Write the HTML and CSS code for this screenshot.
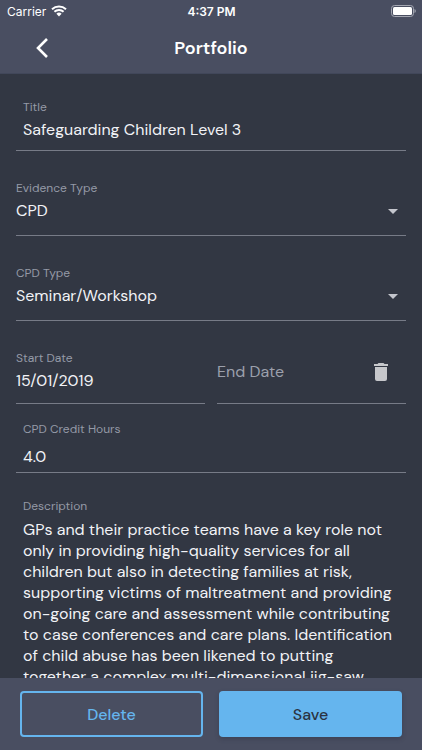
FILE: index.html
```html
<!DOCTYPE html>
<html lang="en">
<head>
<meta charset="utf-8">
<meta name="viewport" content="width=device-width, initial-scale=1">
<title>Portfolio</title>
<link rel="stylesheet" href="styles.css">
</head>
<body>
<div class="app">
  <header class="header">
    <div class="status">
      <div class="carrier">
        <span>Carrier</span>
        <svg class="wifi" viewBox="0 0 16 12" aria-hidden="true">
          <path d="M1 4.2a10.3 10.3 0 0 1 14 0M3.4 6.8a6.8 6.8 0 0 1 9.2 0" fill="none" stroke="currentColor" stroke-width="2"/>
          <path d="M5.4 8.8a3.8 3.8 0 0 1 5.2 0L8 11.5z" fill="currentColor"/>
        </svg>
      </div>
      <span class="time">4:37 PM</span>
      <svg class="battery" viewBox="0 0 25 12" aria-hidden="true">
        <rect x=".5" y=".5" width="22" height="11" rx="3" fill="none" stroke="#a4a7b2"/>
        <rect x="2" y="2" width="19" height="8" rx="1.5" fill="#fff"/>
        <path d="M23.5 4v4q1.3-.6 1.3-2t-1.3-2z" fill="#a4a7b2"/>
      </svg>
    </div>
    <div class="navbar">
      <button class="back" type="button" aria-label="Back">
        <svg viewBox="0 0 12 20" aria-hidden="true"><path d="M11 1 2 10l9 9" fill="none" stroke="currentColor" stroke-width="2.6"/></svg>
      </button>
      <h1 class="heading">Portfolio</h1>
    </div>
  </header>

  <main class="content">
    <form id="entry" class="form">
      <div class="field inset">
        <label for="title">Title</label>
        <input id="title" type="text" value="Safeguarding Children Level 3">
      </div>
      <div class="field choice">
        <label for="evidence">Evidence Type</label>
        <select id="evidence"><option>CPD</option></select>
      </div>
      <div class="field choice">
        <label for="cpd">CPD Type</label>
        <select id="cpd"><option>Seminar/Workshop</option></select>
      </div>
      <div class="dates">
        <div class="field date">
          <label for="start">Start Date</label>
          <input id="start" type="text" value="15/01/2019">
        </div>
        <div class="field end">
          <input id="end" type="text" placeholder="End Date" aria-label="End Date">
          <button class="clear" type="button" aria-label="Clear end date">
            <svg viewBox="0 0 14 18" aria-hidden="true"><path d="M0 1h3.5l1-1h5l1 1H14v2H0zM1 4h12v12a2 2 0 0 1-2 2H3a2 2 0 0 1-2-2z" fill="currentColor"/></svg>
          </button>
        </div>
      </div>
      <div class="field inset hours">
        <label for="hours">CPD Credit Hours</label>
        <input id="hours" type="text" inputmode="decimal" value="4.0">
      </div>
      <div class="field inset description">
        <label for="description">Description</label>
        <textarea id="description" rows="9">GPs and their practice teams have a key role not only in providing high-quality services for all children but also in detecting families at risk, supporting victims of maltreatment and providing on-going care and assessment while contributing to case conferences and care plans. Identification of child abuse has been likened to putting together a complex multi-dimensional jig-saw.</textarea>
      </div>
    </form>
  </main>

  <footer class="actions">
    <button class="button outline" type="button">Delete</button>
    <button class="button solid" type="submit" form="entry">Save</button>
  </footer>
</div>
</body>
</html>
```
FILE: styles.css
```css
* {
  box-sizing: border-box;
}

body {
  margin: 0;
  background: #323743;
  color: #f1f2f6;
  font-family: "DM Sans", Inter, "Liberation Sans", sans-serif;
  font-optical-sizing: none;
}

button,
input,
select,
textarea {
  margin: 0;
  padding: 0;
  border: 0;
  border-radius: 0;
  outline: 0;
  background: none;
  color: inherit;
  font: inherit;
  font-optical-sizing: none;
}

svg {
  display: block;
}

.app {
  display: flex;
  flex-direction: column;
  height: 100vh;
}

.header {
  flex: none;
  background: #494e61;
  border-bottom: 1px solid #41475a;
  color: #fff;
}

.status {
  display: grid;
  grid-template-columns: 1fr auto 1fr;
  align-items: center;
  height: 22px;
  padding: 0 6px 0 7px;
  font-family: Inter, sans-serif;
  font-size: 12px;
}

.carrier {
  display: flex;
  align-items: center;
  gap: 5px;
}

.wifi {
  width: 16px;
  height: 12px;
}

.time {
  font-weight: 600;
}

.battery {
  justify-self: end;
  width: 25px;
  height: 12px;
}

.navbar {
  display: grid;
  grid-template-columns: 52px 1fr 52px;
  align-items: center;
  height: 51px;
  padding: 0 16px;
}

.back {
  display: grid;
  place-items: center;
  height: 48px;
}

.back svg {
  width: 12px;
  height: 20px;
}

.heading {
  margin: 0;
  font-size: 18px;
  font-weight: 600;
  line-height: 24px;
  text-align: center;
}

.content {
  flex: 1;
  min-height: 0;
  overflow: hidden;
}

.form {
  display: flex;
  flex-direction: column;
  padding: 25px 16px 0;
}

.field {
  display: flex;
  flex-direction: column;
  gap: 3px;
  padding-bottom: 8px;
  border-bottom: 1px solid #777b87;
}

.field label {
  color: #959aa7;
  font-size: 12px;
  line-height: 16px;
}

.field input,
.field select {
  width: 100%;
  height: 24px;
  font-size: 16px;
  line-height: 24px;
}

.inset {
  padding-left: 7px;
}

.choice {
  margin-top: 29px;
  padding-bottom: 12px;
}

.choice select {
  appearance: none;
  background: url("data:image/svg+xml,%3Csvg xmlns='http://www.w3.org/2000/svg' viewBox='0 0 10 5'%3E%3Cpath d='M0 0h10L5 5z' fill='%23c4c6cd'/%3E%3C/svg%3E") no-repeat right 8px center / 10px 5px;
}

.dates {
  display: grid;
  grid-template-columns: 1fr 1fr;
  gap: 12px;
  margin-top: 29px;
}

.date {
  padding-bottom: 10px;
}

.end {
  flex-direction: row;
  align-items: center;
  padding-bottom: 10px;
}

.end input {
  flex: 1;
  min-width: 0;
}

.end input::placeholder {
  color: #9ca0ac;
  opacity: 1;
}

.clear {
  flex: none;
  padding: 4px 18px;
  color: #c6c7cb;
}

.clear svg {
  width: 14px;
  height: 18px;
}

.hours {
  gap: 8px;
  margin-top: 17px;
  padding-bottom: 3px;
}

.description {
  gap: 5px;
  margin-top: 25px;
  padding-right: 8px;
}

.description textarea {
  resize: none;
  overflow: hidden;
  font-size: 16px;
  line-height: 21px;
}

.actions {
  display: grid;
  grid-template-columns: 1fr 1fr;
  gap: 16px;
  flex: none;
  padding: 13px 20px;
  background: #494e61;
}

.button {
  height: 46px;
  border-radius: 4px;
  font-size: 16px;
  font-weight: 500;
}

.outline {
  border: 2px solid #65b5ee;
  color: #65b5ee;
}

.solid {
  background: #65b5ee;
  box-shadow: 0 2px 4px #2b304066;
  color: #2b3342;
}
```
